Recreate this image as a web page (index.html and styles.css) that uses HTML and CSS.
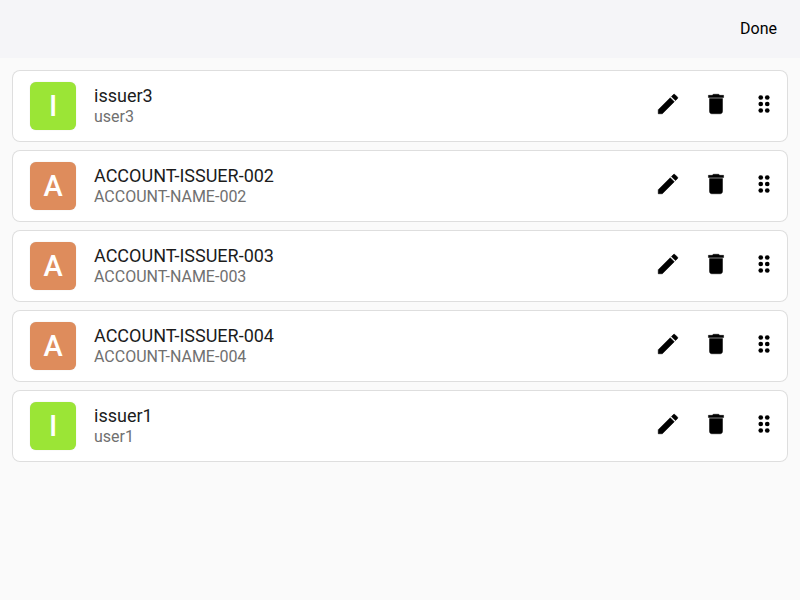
FILE: index.html
```html
<!DOCTYPE html>
<html lang="en">
<head>
<meta charset="utf-8">
<title>Edit accounts</title>
<link rel="stylesheet" href="styles.css">
</head>
<body>
<svg class="sprite" aria-hidden="true">
  <symbol id="edit" viewBox="0 0 24 24"><path stroke="currentColor" stroke-width=".5" d="M3 17.25V21h3.75L17.81 9.94l-3.75-3.75L3 17.25zM20.71 7.04a.996.996 0 0 0 0-1.41l-2.34-2.34a.996.996 0 0 0-1.41 0l-1.83 1.83 3.75 3.75 1.83-1.83z"/></symbol>
  <symbol id="trash" viewBox="0 0 24 24"><path stroke="currentColor" stroke-width=".45" d="M6 19c0 1.1.9 2 2 2h8c1.1 0 2-.9 2-2V7H6v12zM19 4h-3.5l-1-1h-5l-1 1H5v2h14V4z"/></symbol>
  <symbol id="drag" viewBox="0 0 24 24"><circle cx="9" cy="6" r="2.15"/><circle cx="15" cy="6" r="2.15"/><circle cx="9" cy="12" r="2.15"/><circle cx="15" cy="12" r="2.15"/><circle cx="9" cy="18" r="2.15"/><circle cx="15" cy="18" r="2.15"/></symbol>
</svg>
<header class="toolbar"><button class="done" type="button">Done</button></header>
<main>
<ul class="accounts">
  <li class="account">
    <span class="avatar avatar-green" aria-hidden="true">I</span>
    <div class="info"><div class="issuer">issuer3</div><div class="name">user3</div></div>
    <div class="actions">
      <button class="action" type="button" aria-label="Edit"><svg class="icon"><use href="#edit"/></svg></button>
      <button class="action" type="button" aria-label="Delete"><svg class="icon"><use href="#trash"/></svg></button>
      <button class="action" type="button" aria-label="Reorder"><svg class="icon"><use href="#drag"/></svg></button>
    </div>
  </li>
  <li class="account">
    <span class="avatar avatar-orange" aria-hidden="true">A</span>
    <div class="info"><div class="issuer">ACCOUNT-ISSUER-002</div><div class="name">ACCOUNT-NAME-002</div></div>
    <div class="actions">
      <button class="action" type="button" aria-label="Edit"><svg class="icon"><use href="#edit"/></svg></button>
      <button class="action" type="button" aria-label="Delete"><svg class="icon"><use href="#trash"/></svg></button>
      <button class="action" type="button" aria-label="Reorder"><svg class="icon"><use href="#drag"/></svg></button>
    </div>
  </li>
  <li class="account">
    <span class="avatar avatar-orange" aria-hidden="true">A</span>
    <div class="info"><div class="issuer">ACCOUNT-ISSUER-003</div><div class="name">ACCOUNT-NAME-003</div></div>
    <div class="actions">
      <button class="action" type="button" aria-label="Edit"><svg class="icon"><use href="#edit"/></svg></button>
      <button class="action" type="button" aria-label="Delete"><svg class="icon"><use href="#trash"/></svg></button>
      <button class="action" type="button" aria-label="Reorder"><svg class="icon"><use href="#drag"/></svg></button>
    </div>
  </li>
  <li class="account">
    <span class="avatar avatar-orange" aria-hidden="true">A</span>
    <div class="info"><div class="issuer">ACCOUNT-ISSUER-004</div><div class="name">ACCOUNT-NAME-004</div></div>
    <div class="actions">
      <button class="action" type="button" aria-label="Edit"><svg class="icon"><use href="#edit"/></svg></button>
      <button class="action" type="button" aria-label="Delete"><svg class="icon"><use href="#trash"/></svg></button>
      <button class="action" type="button" aria-label="Reorder"><svg class="icon"><use href="#drag"/></svg></button>
    </div>
  </li>
  <li class="account">
    <span class="avatar avatar-green" aria-hidden="true">I</span>
    <div class="info"><div class="issuer">issuer1</div><div class="name">user1</div></div>
    <div class="actions">
      <button class="action" type="button" aria-label="Edit"><svg class="icon"><use href="#edit"/></svg></button>
      <button class="action" type="button" aria-label="Delete"><svg class="icon"><use href="#trash"/></svg></button>
      <button class="action" type="button" aria-label="Reorder"><svg class="icon"><use href="#drag"/></svg></button>
    </div>
  </li>
</ul>
</main>
</body>
</html>
```
FILE: styles.css
```css
* { box-sizing: border-box; }
body {
  margin: 0;
  min-height: 100vh;
  background: #fafafa;
  color: #1c1c1c;
  font-family: Roboto, sans-serif;
}
button {
  border: 0;
  background: none;
  color: #000;
  font: inherit;
  cursor: pointer;
}
.sprite { display: none; }
.toolbar {
  display: flex;
  align-items: center;
  justify-content: flex-end;
  height: 58px;
  padding: 0 15px;
  background: #f5f5f8;
}
.done {
  padding: 8px;
  font-size: 16px;
  line-height: 24px;
}
.accounts {
  display: flex;
  flex-direction: column;
  gap: 8px;
  margin: 0;
  padding: 12px;
  list-style: none;
}
.account {
  display: flex;
  align-items: center;
  height: 72px;
  padding-left: 18px;
  border-radius: 8px;
  background: #fff;
  box-shadow: inset 0 0 0 1px #dedede;
}
.avatar {
  display: flex;
  align-items: center;
  justify-content: center;
  width: 46px;
  height: 48px;
  border-radius: 6px;
  box-shadow: 0 0 1px #ccc;
  color: #fff;
  font-size: 29px;
  font-weight: 500;
}
.avatar-green { background: #9be536; }
.avatar-orange { background: #de8c5c; }
.info {
  flex: 1;
  min-width: 0;
  padding-left: 18px;
}
.issuer { font-size: 18px; line-height: 22px; }
.name { color: #707070; font-size: 16px; line-height: 20px; }
.actions { display: flex; padding-bottom: 4px; }
.action {
  display: grid;
  place-items: center;
  width: 48px;
  height: 48px;
  padding: 0;
}
.icon { width: 26px; height: 26px; fill: currentColor; }
```
